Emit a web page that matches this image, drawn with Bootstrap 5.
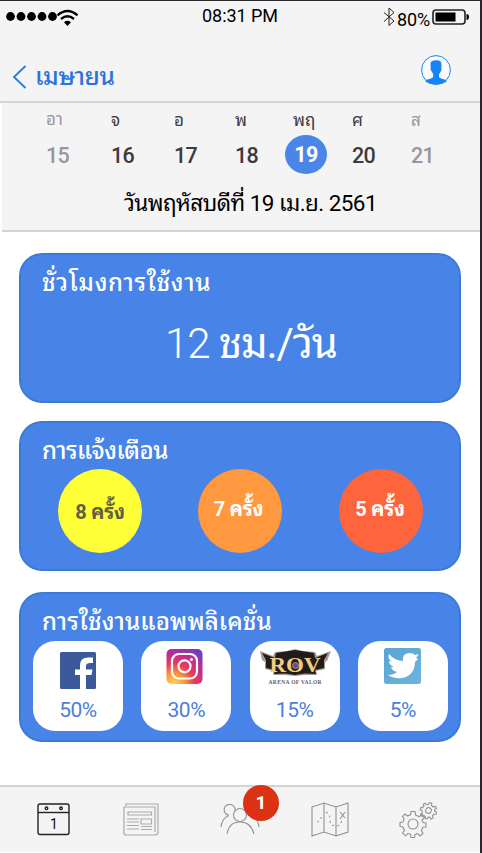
<!DOCTYPE html>
<html lang="th">
<head>
<meta charset="utf-8">
<meta name="viewport" content="width=device-width, initial-scale=1">
<title>เมษายน</title>
<link href="https://cdn.jsdelivr.net/npm/bootstrap@5.3.0/dist/css/bootstrap.min.css" rel="stylesheet">
<style>
body{margin:0;background:#fff;font-family:Roboto,"Noto Sans Thai Looped","Noto Looped Thai",Loma,Garuda,Waree,"Noto Sans Thai",sans-serif;color:#000;overflow:hidden}
.phone{width:482px;height:853px;border-top:1px solid #28282c;border-right:2px solid #28282c;overflow:hidden}
svg{display:block;flex:none}
.statusbar{height:32px;padding:0 11px 0 6px;font-size:18px;line-height:29px;background:#f4f4f4;white-space:nowrap}
.time{width:77px;margin-left:123px;letter-spacing:-.05px;height:32px}
.power{margin-left:104px}
.pct{letter-spacing:-.1px;margin:0 2px 0 2px}
.titlebar{height:70px;background:#f4f4f4;border-bottom:2px solid #d4d4d4;padding:0 29px 0 12px}
.month{font-size:24.5px;font-weight:500;color:#2a73dc;line-height:40px;margin-left:8px;letter-spacing:-.4px}
.avatar{margin-top:22px}
.week{height:129px;background:#f4f4f4;border-bottom:2px solid #d4d4d4;margin-left:2px}
.days{display:grid;grid-template-columns:65px 63px 61px 58px 59px 59px 60px;padding-left:44px;height:73px;color:#3c3a3f}
.dname{font-size:17px;line-height:24px;height:32px;padding-top:5px}
.dnum{font-size:21.5px;font-weight:500;line-height:41px;height:39px;letter-spacing:-.6px}
.off{color:#97989b}
.off:first-child .dname{padding-top:4px}
.today{width:42px;margin-left:-8px;border-radius:50%;background:#4a86e8;color:#fff;font-weight:700;line-height:40px;text-align:center}
.fulldate{font-size:22.5px;line-height:36px;padding:9px 0 0 122px;white-space:nowrap;letter-spacing:-.56px}
.panels{padding:21px 19px 0;height:553px}
.panel{height:150px;border-radius:23px;background:#4884e8;border:2px solid #3a7bd5;color:#fff;width:442px}
.p2{margin-top:18px}
.p3{margin-top:21px}
.ptitle{font-size:24px;font-weight:500;line-height:36px;padding:10px 0 0 21px;height:46px;white-space:nowrap}
.t1{letter-spacing:.74px}
.t2{letter-spacing:-.45px}
.t3{letter-spacing:.14px}
.hours{font-size:42px;line-height:60px;padding:13px 0 0 144px;white-space:nowrap;letter-spacing:-1.1px}
.hours span{font-weight:300}
.bubbles{padding-left:37px}
.bubble{width:84px;height:84px;border-radius:50%;font-size:20px;font-weight:700;line-height:81px;letter-spacing:-.3px;text-align:center;white-space:nowrap}
.b1{background:#ffff38;color:#625f42;line-height:86px}
.b2{background:#ff983e;margin-left:56px;padding-right:3px}
.b3{background:#ff653c;margin-left:57px;padding-right:2px}
.tiles{padding:1px 0 0 12px;gap:18.3px}
.tile{width:90px;height:90px;border-radius:22px;background:#fff;color:#4b7edb;font-size:21px;line-height:30px;letter-spacing:-.5px;text-align:center}
.pic{height:54px}
.tabs{height:67px;background:#f4f4f4;border-top:2px solid #d4d4d4;padding:0 43px 0 37px}
.cal{margin-top:16px}
.news{margin:16px 0 0 53px}
.people{margin:17px 0 0 61px}
.map{margin:15px 0 0 51px}
.gears{margin:14px 0 0 50px}
.alertdot{position:absolute;left:23px;top:-19px;width:36px;height:36px;border-radius:50%;background:#dc3214;color:#fff;font-weight:700;font-size:19px;line-height:36px;text-align:center}
</style>
</head>
<body>
<div class="phone d-flex flex-column">
<header>
<div class="statusbar d-flex align-items-center">
<svg width="73" height="20" viewBox="0 0 73 20"><g><circle cx="4.5" cy="9.5" r="4.4"/><circle cx="15" cy="9.5" r="4.4"/><circle cx="25.5" cy="9.5" r="4.4"/><circle cx="36" cy="9.5" r="4.4"/><circle cx="46.5" cy="9.5" r="4.4"/></g><g fill="none" stroke="#000" stroke-width="2.3"><path d="M51.5 8.300Q61.500-.2 71.500 8.300M55 12Q61.500 6.600 68 12"/></g><path d="M58 15.200Q61.500 12.400 65 15.200L61.500 19z"/></svg>
<span class="time">08:31 PM</span>
<span class="power d-flex align-items-center">
<svg width="12" height="20" viewBox="0 0 12 20" fill="none" stroke="#222" stroke-width="1"><path d="M1 5.500 11 14 6 18.500V1L11 5.500 1 14.500"/></svg>
<span class="pct pt-1">80%</span>
<svg width="37" height="17" viewBox="0 0 37 17"><rect x="1" y="1" width="32" height="14" rx="3" fill="none" stroke="#222" stroke-width="1.6"/><rect x="3.500" y="3.500" width="20" height="9"/><path d="M34.500 5q2.500 0 2.500 3t-2.500 3z"/></svg>
</span>
</div>
<div class="titlebar d-flex justify-content-between">
<a class="d-flex text-decoration-none pt-4" href="#"><svg class="mt-2" width="15" height="24" viewBox="0 0 15 24" fill="none" stroke="#2a78e4" stroke-width="1.8"><path d="M13.500 1 2 12l11.500 11"/></svg><span class="month">เมษายน</span></a>
<svg class="avatar" width="30" height="30" viewBox="0 0 30 30"><circle cx="15" cy="15" r="14.4" fill="#f9fbff" stroke="#1684f7"/><path fill="#1684f7" d="M9.500 9.500Q9 5.500 15 5.300q6-.3 5.500 5.200l-.2 2.500q.8.500-.5 3.500l-1.800 3v2.500q1.200 1.500 6 2.500l2 1.500Q22 29.500 15 29.500T4 26l2-1.500q5-1 6.200-2.500v-3l-1.900-3q-1.500-2.500-.5-3z"/></svg>
</div>
</header>
<section class="week">
<div class="days">
<div class="off"><div class="dname">อา</div><div class="dnum">15</div></div>
<div><div class="dname">จ</div><div class="dnum">16</div></div>
<div><div class="dname">อ</div><div class="dnum">17</div></div>
<div><div class="dname">พ</div><div class="dnum">18</div></div>
<div><div class="dname">พฤ</div><div class="dnum today">19</div></div>
<div><div class="dname">ศ</div><div class="dnum">20</div></div>
<div class="off"><div class="dname">ส</div><div class="dnum">21</div></div>
</div>
<div class="fulldate">วันพฤหัสบดีที่ 19 เม.ย. 2561</div>
</section>
<main class="panels">
<section class="panel"><div class="ptitle t1">ชั่วโมงการใช้งาน</div><div class="hours"><span>12</span> ชม./วัน</div></section>
<section class="panel p2"><div class="ptitle t2">การแจ้งเตือน</div>
<div class="d-flex bubbles"><div class="bubble b1">8 ครั้ง</div><div class="bubble b2">7 ครั้ง</div><div class="bubble b3">5 ครั้ง</div></div></section>
<section class="panel p3"><div class="ptitle t3">การใช้งานแอพพลิเคชั่น</div>
<div class="d-flex tiles">
<div class="tile"><div class="pic"><svg width="90" height="54" viewBox="0 0 90 54"><rect x="27" y="11" width="36" height="37" rx="1.5" fill="#3c5a99"/><path fill="#fff" d="M47 48V34h-5v-5.500h5v-4q0-8 8-8h5v5.500h-3q-4 0-4 3v3.500h6.500l-1 5.500h-5.500v14z"/></svg></div>50%</div>
<div class="tile"><div class="pic"><svg width="90" height="54" viewBox="0 0 90 54"><defs><radialGradient id="ig" cx=".2" cy="1" r="1.15"><stop offset="0" stop-color="#ffd35c"/><stop offset=".25" stop-color="#fb9c3c"/><stop offset=".5" stop-color="#ec3b57"/><stop offset=".75" stop-color="#bd2c93"/><stop offset="1" stop-color="#6b3fc0"/></radialGradient></defs><rect x="25.500" y="8" width="36" height="35" rx="5" fill="url(#ig)"/><g fill="none" stroke="#fff" stroke-width="2.2"><rect x="31" y="13" width="25" height="24.500" rx="7"/><circle cx="43.500" cy="25.300" r="6"/></g><circle cx="50.500" cy="18.500" r="1.5" fill="#fff"/></svg></div>30%</div>
<div class="tile"><div class="pic"><svg width="90" height="54" viewBox="0 0 90 54"><path fill="#a39b97" d="M10 10l13 5 2-4 12-1 8-2 8 2 12 1 2 4 14-5-4 10-2 1v7l-9 2 1 4-12 0-10 1-10-1-12 0 1-4-9-2v-7l-3-2z"/><path fill="#211c1b" d="M12 12l13 5 1-5 19-3 19 3 1 5 13-5-4 7v8l-9 2 1 4-11-.5-10 1.500-10-1.500-11 .5 1-4-9-2v-8z"/><text x="45" y="31" font-family="Liberation Serif, serif" font-weight="700" font-size="20" letter-spacing="0" text-anchor="middle" textLength="51" lengthAdjust="spacingAndGlyphs" fill="#f0cd80">ROV</text><circle cx="45.500" cy="24.500" r="3" fill="#6546ad" stroke="#bb9553"/><text x="45" y="42.500" font-family="Liberation Serif, serif" font-weight="700" font-size="5.5" letter-spacing="0" text-anchor="middle" textLength="53" fill="#625c5c">ARENA OF VALOR</text></svg></div>15%</div>
<div class="tile"><div class="pic"><svg width="90" height="54" viewBox="0 0 90 54"><defs><linearGradient id="tw" y2="1"><stop stop-color="#5aa4d0"/><stop offset="1" stop-color="#6eb5de"/></linearGradient></defs><rect x="26" y="7" width="37" height="36" rx="2.5" fill="url(#tw)"/><path fill="#fff" d="M31 13q6 7 14 7-1-8 7-8 3 0 5 2l4-1-3 4 2 1-3 3c0 16-16 20-27 13q6 0 9-3-5-1-6-5h3q-5-2-5-6l3 .5q-5-3-3-7.500z"/></svg></div>5%</div>
</div></section>
</main>
<nav class="tabs d-flex">
<svg class="cal" width="33" height="33" viewBox="0 0 33 33" fill="none" stroke="#222" stroke-width="1.4"><rect x="1" y="1" width="31" height="30.5" rx="2"/><path d="M1 9.500h31"/><circle cx="9.500" cy="5.300" r="1.3"/><circle cx="24" cy="5.300" r="1.3"/><text x="17" y="26" font-size="14" text-anchor="middle" fill="#111" stroke="none">1</text></svg>
<svg class="news" width="36" height="34" viewBox="0 0 36 34" fill="none" stroke="#aaa" stroke-width="1.2"><path d="M3 3V1h32v28q0 3-3 3H3q-2 0-2-2V4h31v25M5 9h23.500v3H5zM18 16h10.500v5H18zM4 16h12M4 19h12M4 22.500h12M4 26h12M18 23.500h11M18 26.500h11"/></svg>
<div class="people position-relative"><svg width="40" height="34" viewBox="0 0 40 34" fill="none" stroke="#929292" stroke-width="1.1"><path d="M15 7.200A5.500 5.500 0 1 0 9 11.300M25 7a5.500 5.500 0 1 1 6 4.300"/><circle cx="20" cy="11" r="6.5"/><path d="M7 30q2-12 13-12t14 12M1 23q1-9 8-11.500M31 11.500q7 2.500 8 11.500"/></svg><span class="alertdot">1</span></div>
<svg class="map" width="38" height="35" viewBox="0 0 38 35" fill="none" stroke="#929292" stroke-width="1.1"><path d="M1 5l12-4 12 4 12-4v29l-12 4-12-4-12 4zM13 1v29M25 5v29"/><path stroke-dasharray="2 3" d="M6 20q4-1 5-8M15 10q4 2 4 8t6 6q5 0 6-7"/><path d="M29 10l5 6m0-6-5 7"/></svg>
<svg class="gears" width="40" height="38" viewBox="-14 -23 40 38" fill="none" stroke="#929292" stroke-width="1.1"><defs><path id="gear" d="M-2-12.500H2L2.500-9Q4.500-8.500 6-7.200L8.900-9.500 11.500-6.500 9-4Q10-2 10-1.500L13-1V3L10 3.200Q9.500 5 8.300 6.300L10 9.500 7 12 4.500 9.400Q3 10.200 2 10.500L1.500 13.500H-2L-2.500 10.400Q-4 10-5 9.400L-7.500 11.800-10.500 9-8.300 6.300Q-9.500 5-10 3L-13 2.500V-1.500L-10-2Q-9.800-3.500-8.800-5L-10.500-7.500-8-10-5.300-8Q-4-8.800-2.500-9.100Z"/></defs><use href="#gear"/><circle r="5"/><g transform="translate(15.500 -13.500) scale(.63) rotate(15)" stroke-width="1.7"><use href="#gear"/><circle r="4.5"/></g></svg>
</nav>
</div>
<script src="https://cdn.jsdelivr.net/npm/bootstrap@5.3.0/dist/js/bootstrap.bundle.min.js"></script>
</body>
</html>
